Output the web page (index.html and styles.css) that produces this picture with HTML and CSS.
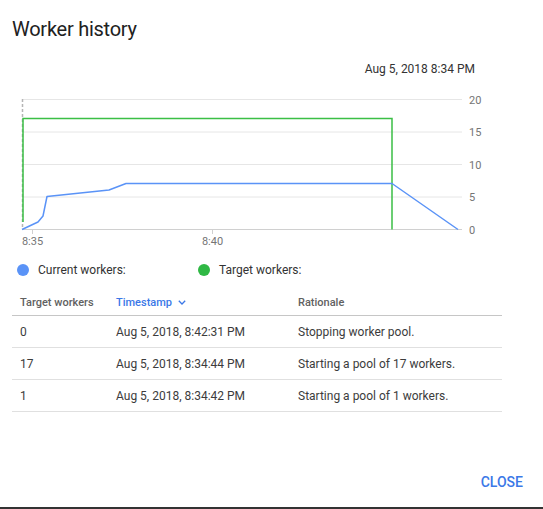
FILE: index.html
```html
<!DOCTYPE html>
<html>
<head>
<meta charset="utf-8">
<link rel="stylesheet" href="styles.css">
</head>
<body>
<div class="dialog">
  <h1 class="title">Worker history</h1>
  <div class="date">Aug 5, 2018 8:34 PM</div>
  <svg class="chart" width="543" height="160" viewBox="0 0 543 160">
    <g stroke="#e6e6e6" stroke-width="1">
      <line x1="22" y1="9.5" x2="462" y2="9.5"/>
      <line x1="22" y1="42" x2="462" y2="42"/>
      <line x1="22" y1="74.5" x2="462" y2="74.5"/>
      <line x1="22" y1="107" x2="462" y2="107"/>
    </g>
    <line x1="22" y1="139.5" x2="462" y2="139.5" stroke="#d0d0d0" stroke-width="1"/>
    <g stroke="#d0d0d0" stroke-width="1">
      <line x1="32.5" y1="139.5" x2="32.5" y2="144"/>
      <line x1="212.5" y1="139.5" x2="212.5" y2="144"/>
    </g>
    <line x1="22.5" y1="9" x2="22.5" y2="139" stroke="#b5b5b5" stroke-width="1.5" stroke-dasharray="3 2"/>
    <g class="axis" fill="#757575">
      <text x="469" y="13.5">20</text>
      <text x="469" y="46">15</text>
      <text x="469" y="78.5">10</text>
      <text x="469" y="111">5</text>
      <text x="469" y="143.5">0</text>
      <text x="32.5" y="155" text-anchor="middle">8:35</text>
      <text x="212.5" y="155" text-anchor="middle">8:40</text>
    </g>
    <polyline points="23,132 23,28.5 392,28.5 392,139.5" fill="none" stroke="#3bbf45" stroke-width="1.5"/>
    <polyline points="22,139.5 38,132 43,126 47,106.5 109,100 126,93.5 392,93.5 458,139.5" fill="none" stroke="#5a93f7" stroke-width="1.5" stroke-linejoin="round"/>
  </svg>
  <div class="legend">
    <div class="legend-item"><span class="dot dot-blue"></span>Current workers:</div>
    <div class="legend-item"><span class="dot dot-green"></span>Target workers:</div>
  </div>
  <div class="table">
    <div class="row head">
      <div class="c1">Target workers</div>
      <div class="c2 sorted">Timestamp
        <svg class="chev" width="8" height="5" viewBox="0 0 8 5"><polyline points="0.8,0.8 4,4 7.2,0.8" fill="none" stroke="#3b78e7" stroke-width="1.3"/></svg>
      </div>
      <div class="c3">Rationale</div>
    </div>
    <div class="row">
      <div class="c1">0</div>
      <div class="c2">Aug 5, 2018, 8:42:31 PM</div>
      <div class="c3">Stopping worker pool.</div>
    </div>
    <div class="row">
      <div class="c1">17</div>
      <div class="c2">Aug 5, 2018, 8:34:44 PM</div>
      <div class="c3">Starting a pool of 17 workers.</div>
    </div>
    <div class="row">
      <div class="c1">1</div>
      <div class="c2">Aug 5, 2018, 8:34:42 PM</div>
      <div class="c3">Starting a pool of 1 workers.</div>
    </div>
  </div>
  <div class="footer">
    <button class="close">CLOSE</button>
  </div>
</div>
</body>
</html>
```
FILE: styles.css
```css
html, body {
  margin: 0;
  padding: 0;
  background: #fff;
}
body {
  font-family: Roboto, "Noto Sans", sans-serif;
  color: #333;
}
.dialog {
  width: 543px;
  height: 509px;
  box-sizing: border-box;
  border-bottom: 2px solid #333;
  display: flex;
  flex-direction: column;
  padding-top: 17px;
}
.title {
  margin: 0;
  padding-left: 12px;
  font-size: 20px;
  line-height: 24px;
  font-weight: 400;
  letter-spacing: -0.25px;
  color: #212121;
}
.date {
  margin-top: 20px;
  padding-right: 68px;
  text-align: right;
  font-size: 12px;
  line-height: 16px;
  color: #333;
}
.chart {
  display: block;
  margin-top: 13px;
}
.axis {
  font-family: Roboto, sans-serif;
  font-size: 11px;
}
.legend {
  display: flex;
  margin-top: 12px;
  padding-left: 17px;
  font-size: 12px;
  line-height: 16px;
  color: #333;
}
.legend-item {
  display: flex;
  align-items: center;
  width: 181px;
}
.dot {
  width: 12px;
  height: 12px;
  border-radius: 50%;
  margin-right: 9px;
}
.dot-blue { background: #5a93f7; }
.dot-green { background: #2fb844; }
.table {
  margin: 11px 41px 0 12px;
}
.row {
  display: flex;
  align-items: center;
  height: 31px;
  border-bottom: 1px solid #e0e0e0;
  font-size: 12px;
  color: #3c3c3c;
}
.row.head {
  height: 26px;
  border-bottom-color: #c6c6c6;
  font-size: 11px;
  font-weight: 500;
  color: #616161;
}
.c1 { width: 96px; padding-left: 8px; }
.c2 { width: 182px; display: flex; align-items: center; }
.c3 { flex: 1; }
.sorted { color: #3b78e7; }
.chev { margin-left: 6px; }
.footer {
  margin-top: auto;
  display: flex;
  justify-content: flex-end;
  padding: 0 20px 15px 0;
}
.close {
  border: 0;
  background: none;
  padding: 0;
  font-family: Roboto, sans-serif;
  font-size: 14px;
  line-height: 20px;
  font-weight: 500;
  color: #3b78e7;
}
```
